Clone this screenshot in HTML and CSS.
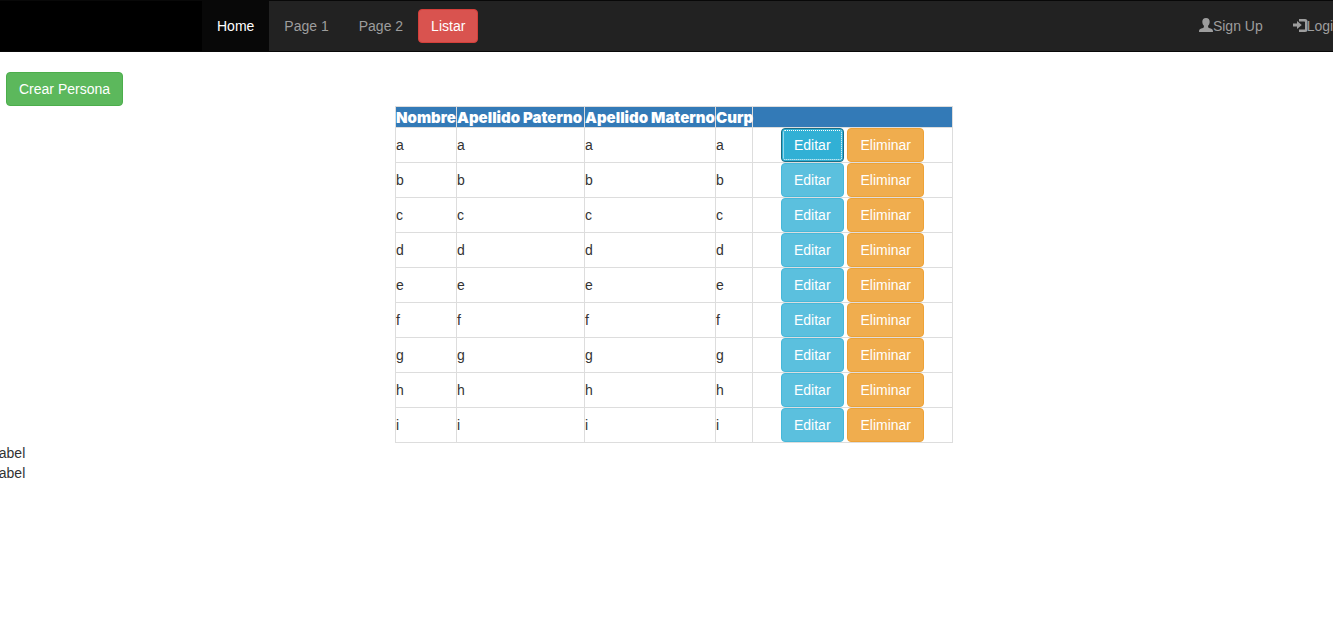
FILE: index.html
```html
<!DOCTYPE html>
<html lang="es">
<head>
<meta charset="utf-8">
<title>Personas</title>
<link rel="stylesheet" href="styles.css">
</head>
<body>
<nav class="navbar">
  <div class="brand"></div>
  <ul class="nav">
    <li><a class="nav-link active" href="#">Home</a></li>
    <li><a class="nav-link" href="#">Page 1</a></li>
    <li><a class="nav-link" href="#">Page 2</a></li>
    <li><button class="btn btn-danger" type="button">Listar</button></li>
  </ul>
  <ul class="nav nav-right">
    <li><a class="nav-link" href="#"><svg class="icon" viewBox="0 0 14 14" aria-hidden="true"><path d="M7 0C9.500 0 10.700 1.500 10.700 3.700C10.700 5.500 9.900 6.900 9.100 7.700V9.200C9.600 9.900 11.600 10.300 12.800 11.100C13.700 11.700 14 12.400 14 14H0C0 12.400.3 11.700 1.200 11.100C2.400 10.300 4.400 9.900 4.900 9.200V7.700C4.100 6.900 3.300 5.500 3.300 3.700C3.300 1.500 4.500 0 7 0Z"/></svg>Sign Up</a></li>
    <li><a class="nav-link" href="#"><svg class="icon" viewBox="0 0 14 14" aria-hidden="true"><path d="M0 5.500H4V3L8.800 7L4 11V8.500H0ZM6 1H12Q14.500 1 14.500 3.500V11.500Q14.500 14 12 14H6V11.600H11.300Q12 11.600 12 10.900V4.100Q12 3.400 11.300 3.400H6Z"/></svg>Login</a></li>
  </ul>
</nav>
<main class="content">
  <div class="toolbar"><button class="btn btn-success" type="button">Crear Persona</button></div>
  <div class="grid-wrap">
    <table class="grid">
      <colgroup><col class="col-name"><col class="col-father"><col class="col-mother"><col class="col-curp"><col class="col-actions"></colgroup>
      <thead><tr><th>Nombre</th><th>Apellido Paterno</th><th>Apellido Materno</th><th>Curp</th><th></th></tr></thead>
      <tbody>
        <tr><td>a</td><td>a</td><td>a</td><td>a</td><td class="actions"><button class="btn btn-info focused" type="button">Editar</button> <button class="btn btn-warning" type="button">Eliminar</button></td></tr>
        <tr><td>b</td><td>b</td><td>b</td><td>b</td><td class="actions"><button class="btn btn-info" type="button">Editar</button> <button class="btn btn-warning" type="button">Eliminar</button></td></tr>
        <tr><td>c</td><td>c</td><td>c</td><td>c</td><td class="actions"><button class="btn btn-info" type="button">Editar</button> <button class="btn btn-warning" type="button">Eliminar</button></td></tr>
        <tr><td>d</td><td>d</td><td>d</td><td>d</td><td class="actions"><button class="btn btn-info" type="button">Editar</button> <button class="btn btn-warning" type="button">Eliminar</button></td></tr>
        <tr><td>e</td><td>e</td><td>e</td><td>e</td><td class="actions"><button class="btn btn-info" type="button">Editar</button> <button class="btn btn-warning" type="button">Eliminar</button></td></tr>
        <tr><td>f</td><td>f</td><td>f</td><td>f</td><td class="actions"><button class="btn btn-info" type="button">Editar</button> <button class="btn btn-warning" type="button">Eliminar</button></td></tr>
        <tr><td>g</td><td>g</td><td>g</td><td>g</td><td class="actions"><button class="btn btn-info" type="button">Editar</button> <button class="btn btn-warning" type="button">Eliminar</button></td></tr>
        <tr><td>h</td><td>h</td><td>h</td><td>h</td><td class="actions"><button class="btn btn-info" type="button">Editar</button> <button class="btn btn-warning" type="button">Eliminar</button></td></tr>
        <tr><td>i</td><td>i</td><td>i</td><td>i</td><td class="actions"><button class="btn btn-info" type="button">Editar</button> <button class="btn btn-warning" type="button">Eliminar</button></td></tr>
      </tbody>
    </table>
  </div>
  <div class="labels">
    <div>Label</div>
    <div>Label</div>
  </div>
</main>
</body>
</html>
```

FILE: styles.css
```css
* { box-sizing: border-box; }

body {
  margin: 0;
  overflow-x: hidden;
  background: #fff;
  color: #333;
  font: 14px/20px "Liberation Sans", Arial, sans-serif;
}

.navbar {
  display: flex;
  margin-bottom: 20px;
  overflow: hidden;
  background: #222;
  border-top: 1px solid #080808;
  border-bottom: 1px solid #080808;
}

.brand {
  flex: none;
  width: 202px;
  background: #000;
}

.nav {
  display: flex;
  align-items: center;
  margin: 0;
  padding: 0;
  list-style: none;
}

.nav-right {
  margin-left: auto;
  margin-right: -23px;
}

.nav-link {
  display: block;
  padding: 15px;
  color: #9d9d9d;
  text-decoration: none;
  white-space: nowrap;
}

.nav-link.active {
  background: #080808;
  color: #fff;
}

.icon {
  width: 14px;
  height: 14px;
  overflow: visible;
  vertical-align: -1px;
  fill: currentColor;
}

.btn {
  display: inline-block;
  padding: 6px 12px;
  border: 1px solid transparent;
  border-radius: 4px;
  color: #fff;
  font: inherit;
  vertical-align: middle;
  white-space: nowrap;
  cursor: pointer;
}

.btn-danger { background: #d9534f; border-color: #d43f3a; }
.btn-success { background: #5cb85c; border-color: #4cae4c; }
.btn-info { background: #5bc0de; border-color: #46b8da; }
.btn-warning { background: #f0ad4e; border-color: #eea236; }

.btn-info.focused {
  background: #31b0d5;
  border-color: #1b6d85;
  outline: 1px dotted #fff;
  outline-offset: -3px;
}

.toolbar {
  display: flex;
  padding-left: 6px;
}

.grid-wrap {
  display: flex;
  justify-content: center;
  padding-left: 15px;
}

.grid {
  border-collapse: collapse;
  table-layout: fixed;
  width: 558px;
}

.col-name { width: 61px; }
.col-father { width: 128px; }
.col-mother { width: 131px; }
.col-curp { width: 37px; }
.col-actions { width: 200px; }

.grid th,
.grid td {
  padding: 0;
  border: 1px solid #ddd;
  text-align: left;
}

.grid th {
  height: 21px;
  padding-top: 2px;
  background: #337ab7;
  color: #fff;
  font-family: "Arial Black", Inter, sans-serif;
  font-size: 15px;
  font-weight: 900;
  line-height: 18px;
  white-space: nowrap;
}

.grid .actions {
  height: 35px;
  text-align: center;
}

.labels { margin-left: -9px; }
```
